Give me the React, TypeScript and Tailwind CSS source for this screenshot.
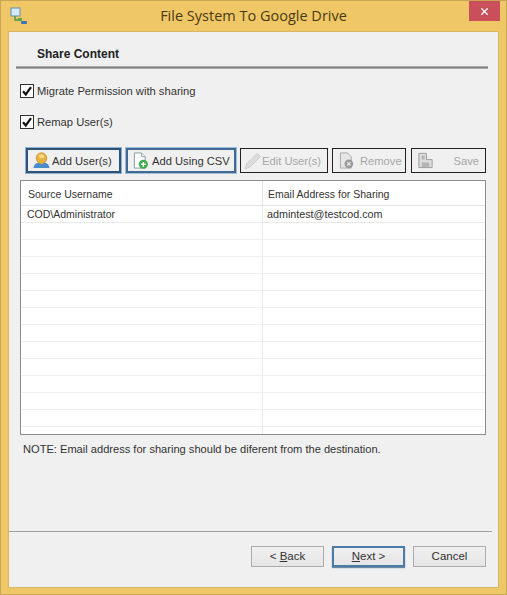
import React from "react";
import { X } from "lucide-react";

const rowKeys = Array.from({ length: 13 }, (_, i) => i);

function Check() {
    return (
        <span className="flex h-[14px] w-[14px] items-center justify-center border border-[#333] bg-white">
            <svg viewBox="0 0 12 12" className="h-[12px] w-[12px]">
                <path d="M2 6.2 L4.8 9.5 L10 2.2" fill="none" stroke="#111" strokeWidth="2.2" />
            </svg>
        </span>
    );
}

function UserIcon() {
    return (
        <svg viewBox="0 0 18 18" className="h-[17px] w-[17px] shrink-0">
            <path d="M0.5 17 C1 13 3.5 11.5 6 11 L9 13 L12 11 C14.5 11.5 17 13 17.5 17 Z" fill="#4a8ccb" />
            <circle cx="9" cy="6.5" r="5.6" fill="#e8b33c" stroke="#c48d22" strokeWidth="0.8" />
            <ellipse cx="9" cy="4.5" rx="3" ry="2" fill="#f6d98a" />
        </svg>
    );
}

function CsvIcon() {
    return (
        <svg viewBox="0 0 18 18" className="h-[17px] w-[17px] shrink-0">
            <path d="M2.5 1 H10 L14 5 V17 H2.5 Z" fill="#fff" stroke="#7f9a9c" />
            <path d="M10 1 V5 H14" fill="#dfe8e8" stroke="#7f9a9c" strokeWidth="0.8" />
            <circle cx="12" cy="13" r="4.8" fill="#3fae4a" />
            <path d="M12 10.5 V15.5 M9.5 13 H14.5" stroke="#fff" strokeWidth="1.6" />
        </svg>
    );
}

function PencilIcon() {
    return (
        <svg viewBox="0 0 18 18" className="h-[18px] w-[18px] shrink-0">
            <path d="M1 17 L3 11.5 L13 1.5 L16.5 4.5 L6.5 14.5 Z" fill="#dcdcdc" stroke="#cccccc" />
        </svg>
    );
}

function RemoveIcon() {
    return (
        <svg viewBox="0 0 18 18" className="h-[17px] w-[17px] shrink-0">
            <path d="M2.5 1 H10 L14 5 V17 H2.5 Z" fill="#e6e6e6" stroke="#a8a8a8" />
            <circle cx="11.5" cy="12.5" r="4.6" fill="#9a9a9a" />
            <path d="M9.7 10.7 L13.3 14.3 M13.3 10.7 L9.7 14.3" stroke="#eee" strokeWidth="1.2" />
        </svg>
    );
}

function SaveIcon() {
    return (
        <svg viewBox="0 0 18 18" className="h-[17px] w-[17px] shrink-0">
            <path d="M2 1.5 H10 V8 H16 V16.5 H2 Z" fill="#dcdcdc" stroke="#9c9c9c" />
            <path d="M5 4 H8 V8 H5 Z M5 11 H13 V16 H5 Z" fill="#b4b4b4" />
        </svg>
    );
}

function LogoIcon() {
    return (
        <svg viewBox="0 0 18 18" className="h-[18px] w-[18px]">
            <rect x="1" y="1" width="9" height="8" fill="#d5e9f5" stroke="#5c93b5" />
            <path d="M5 9 V13 H9" fill="none" stroke="#4d9a46" strokeWidth="1.5" />
            <path d="M8 11 L12 11 L12 14 H8 Z" fill="#5aa84f" />
            <rect x="11" y="14" width="6" height="3" rx="1" fill="#3d74b8" />
        </svg>
    );
}

function App() {
    return (
        <div className="flex h-[595px] w-[507px] flex-col overflow-hidden border border-[#c8a655] bg-[#f0c766] font-['Liberation_Sans',sans-serif] text-[#222]">
            {/* title bar */}
            <div className="relative flex h-[30px] shrink-0 items-center justify-center">
                <span className="absolute left-[9px] top-[6px]">
                    <LogoIcon />
                </span>
                <span className="pb-[1px] font-['Open_Sans',sans-serif] text-[14.5px] text-[#4a3a14]">
                    File System To Google Drive
                </span>
                <span className="absolute right-[6px] top-0 flex h-[20px] w-[31px] items-center justify-center bg-[#c9505a] text-white">
                    <X size={11} strokeWidth={3} />
                </span>
            </div>

            {/* body */}
            <div className="mx-[7px] flex h-[557px] flex-col border border-[#d9b766] bg-[#f0f0f0]">
                <div className="pl-[28px] pt-[14px] text-[12px] font-bold leading-[16px] text-[#222]">
                    Share Content
                </div>
                <div className="ml-[7px] mr-[10px] mt-[4px] h-[3px] border-y border-y-[#aaaaaa] bg-[#7f7f7f]" />

                <div className="mt-[14px] flex h-[16px] items-center gap-[3px] pl-[11px] text-[11.2px] text-[#333]">
                    <Check />
                    <span>Migrate Permission with sharing</span>
                </div>
                <div className="mt-[15px] flex h-[16px] items-center gap-[3px] pl-[11px] text-[11.2px] text-[#333]">
                    <Check />
                    <span>Remap User(s)</span>
                </div>

                {/* toolbar */}
                <div className="ml-[17px] mt-[18px] flex h-[25px] text-[11.2px] whitespace-nowrap text-[#333]">
                    <button className="flex w-[95px] items-center gap-[2px] border-2 border-[#2f5278] bg-[#f0f0f0] pl-[5px] shadow-[0_0_0_1px_#8fb1d0]">
                        <UserIcon />
                        <span className="pt-[1px]">Add User(s)</span>
                    </button>
                    <button className="ml-[5px] flex w-[110px] items-center gap-[3px] border-2 border-[#3f6a94] bg-[#f0f0f0] pl-[4px] shadow-[0_0_0_1px_#9dbdd8]">
                        <CsvIcon />
                        <span className="pt-[1px]">Add Using CSV</span>
                    </button>
                    <button className="ml-[4px] flex w-[88px] items-center border border-[#222] bg-[#f0f0f0] pl-[3px] text-[#a6a6a6]">
                        <PencilIcon />
                        <span className="pt-[1px]">Edit User(s)</span>
                    </button>
                    <button className="ml-[4px] flex w-[74px] items-center gap-[5px] border border-[#222] bg-[#f0f0f0] pl-[5px] text-[#a6a6a6]">
                        <RemoveIcon />
                        <span className="pt-[1px]">Remove</span>
                    </button>
                    <button className="ml-[5px] flex w-[75px] items-center justify-between border border-[#222] bg-[#f0f0f0] pl-[5px] pr-[6px] text-[#a6a6a6]">
                        <SaveIcon />
                        <span className="pt-[1px]">Save</span>
                    </button>
                </div>

                {/* grid */}
                <div className="ml-[11px] mt-[7px] h-[255px] w-[466px] overflow-hidden border border-[#8c8c8c] bg-white text-[10.5px] text-[#333]">
                    <div className="flex h-[25px] border-b border-[#e4e4e4]">
                        <div className="flex w-[242px] items-center border-r border-[#e4e4e4] pl-[7px] pt-[3px]">
                            Source Username
                        </div>
                        <div className="flex items-center pl-[5px] pt-[3px]">
                            Email Address for Sharing
                        </div>
                    </div>
                    <div className="flex h-[17px] border-b border-[#e9e9e9]">
                        <div className="flex w-[242px] items-center border-r border-[#e9e9e9] pl-[6px] pt-[1px]">
                            COD\Administrator
                        </div>
                        <div className="flex items-center pl-[4px] text-[10.75px]">
                            admintest@testcod.com
                        </div>
                    </div>
                    {rowKeys.map((i) => (
                        <div key={i} className="flex h-[17px] border-b border-[#eeeeee]">
                            <div className="w-[242px] border-r border-[#e9e9e9]" />
                        </div>
                    ))}
                </div>

                <div className="ml-[14px] mt-[7px] text-[11.1px] leading-[14px] text-[#333]">
                    NOTE: Email address for sharing should be diferent from the destination.
                </div>

                <div className="mr-[6px] mt-[75px] h-[1px] bg-[#a0a0a0]" />

                {/* footer buttons */}
                <div className="ml-[242px] mt-[14px] flex h-[21px] gap-[8px] text-[11.5px] text-[#333]">
                    <button className="w-[73px] border border-[#acacac] bg-gradient-to-b from-[#f0f0f0] to-[#e5e5e5]">
                        &lt; <span className="underline">B</span>ack
                    </button>
                    <button className="w-[73px] border-2 border-[#4d7ba8] bg-gradient-to-b from-[#f0f0f0] to-[#e5e5e5] shadow-[0_1px_1px_#6b87a3]">
                        <span className="underline">N</span>ext &gt;
                    </button>
                    <button className="w-[73px] border border-[#acacac] bg-gradient-to-b from-[#f0f0f0] to-[#e5e5e5]">
                        Cancel
                    </button>
                </div>
            </div>
        </div>
    );
}

export default App;
